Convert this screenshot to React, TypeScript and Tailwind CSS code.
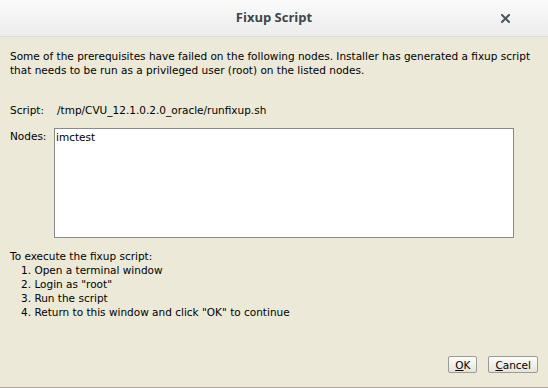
export default function App() {
  const steps = [
    "Open a terminal window",
    'Login as "root"',
    "Run the script",
    'Return to this window and click "OK" to continue',
  ];

  return (
    <div className="w-[548px] h-[388px] flex flex-col bg-[#ece9d8] overflow-hidden border-b border-[#a8a8a0]">
      {/* title bar */}
      <div className="relative h-[37px] shrink-0 flex items-center justify-center bg-gradient-to-b from-[#fbfbfb] to-[#ececec] border-b border-[#dcdcdc]">
        <span className="text-[13px] font-bold text-[#3d4749] font-['Open_Sans',sans-serif]">
          Fixup Script
        </span>
        <svg className="absolute left-[501px] top-[14px]" width="9" height="9" viewBox="0 0 9 9">
          <path d="M1 1 L8 8 M8 1 L1 8" stroke="#4a565a" strokeWidth="2" strokeLinecap="square" />
        </svg>
      </div>

      {/* body */}
      <div className="flex-1 flex flex-col px-[10px] pt-[12px] text-[10.5px] leading-[14px] text-black font-['DejaVu_Sans',sans-serif]">
        <p>
          Some of the prerequisites have failed on the following nodes. Installer has generated a fixup script
          that needs to be run as a privileged user (root) on the listed nodes.
        </p>

        <div className="flex mt-[26px]">
          <span className="w-[47px]">Script:</span>
          <span>/tmp/CVU_12.1.0.2.0_oracle/runfixup.sh</span>
        </div>

        <div className="flex mt-[11px]">
          <span className="w-[44px] pt-[1px]">Nodes:</span>
          <div className="w-[460px] h-[110px] bg-white border border-[#8a8a8a] px-[1px] pt-[1px]">imctest</div>
        </div>

        <div className="mt-[11px]">
          <div>To execute the fixup script:</div>
          {steps.map((s, i) => (
            <div key={i} className="pl-[11px]">
              {i + 1}. {s}
            </div>
          ))}
        </div>

        <div className="flex justify-end gap-[11px] mt-auto mb-[14px]">
          <button className="h-[17px] px-[6px] border border-[#9a9a9a] rounded-[2px] bg-gradient-to-b from-[#fdfdfb] to-[#e6e3d8] text-[10.5px] leading-[14px]">
            <span className="underline">O</span>K
          </button>
          <button className="h-[17px] px-[6px] border border-[#9a9a9a] rounded-[2px] bg-gradient-to-b from-[#fdfdfb] to-[#e6e3d8] text-[10.5px] leading-[14px]">
            <span className="underline">C</span>ancel
          </button>
        </div>
      </div>
    </div>
  );
}
